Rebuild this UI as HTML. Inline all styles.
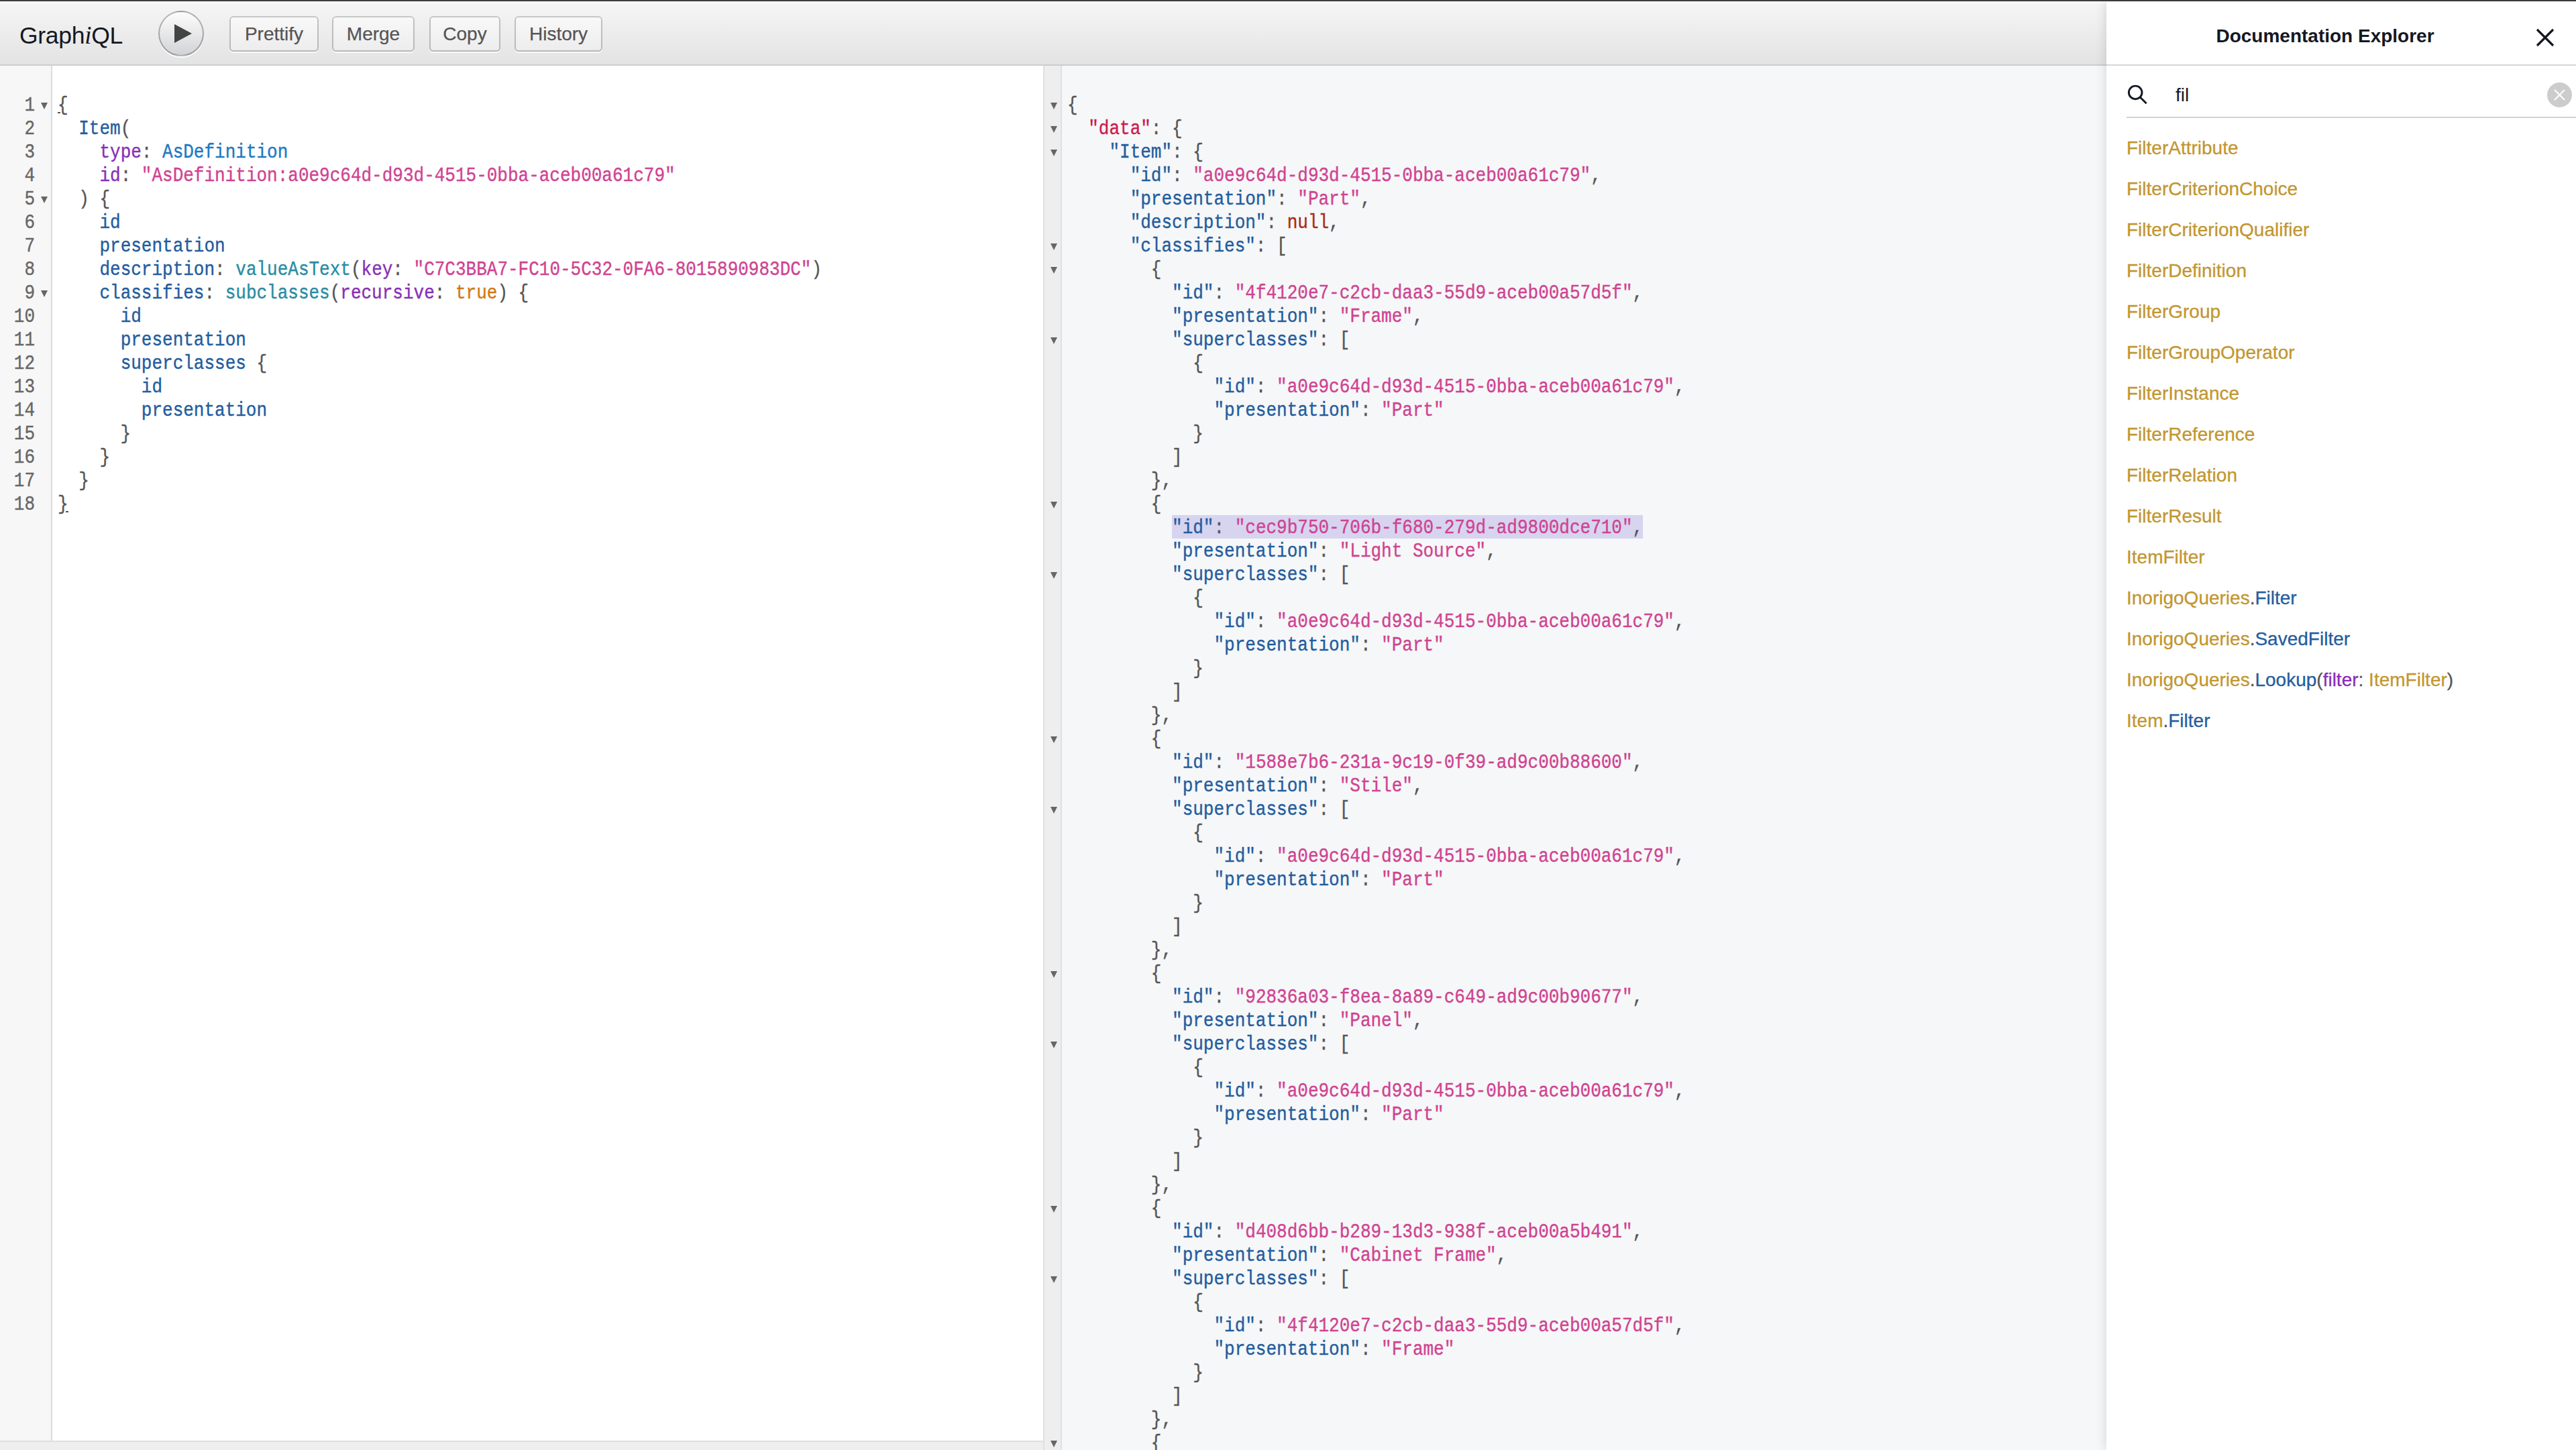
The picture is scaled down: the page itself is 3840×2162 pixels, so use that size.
<!DOCTYPE html>
<html><head><meta charset="utf-8">
<style>
html,body{margin:0;padding:0;}
body{width:3840px;height:2162px;overflow:hidden;position:relative;background:#fff;font-family:"Liberation Sans",sans-serif;}
.abs{position:absolute;}
#topline{left:0;top:0;width:3840px;height:2px;background:#3e403f;}
#toolbar{left:0;top:2px;width:3140px;height:94px;background:linear-gradient(#fbfbfb 0px,#f5f5f5 4px,#e3e3e3 94px);border-bottom:2px solid #cdcdcd;}
#logo{left:29px;top:28px;font-size:35.5px;letter-spacing:-0.3px;line-height:50px;color:#141823;white-space:nowrap;}
#logo i{font-style:italic;font-family:"Liberation Serif",serif;font-size:37px;margin:0;}
#exec{left:236px;top:16px;width:64px;height:64px;border-radius:50%;border:2px solid rgba(0,0,0,0.28);background:linear-gradient(#fdfdfd,#d2d3d6);box-shadow:0 2px 0 #fff;}
.btn{-webkit-text-stroke:0.25px #555;top:24px;height:53px;border-radius:6px;background:linear-gradient(#f9f9f9,#ececec);box-shadow:inset 0 0 0 2px rgba(0,0,0,0.22),0 2px 0 rgba(255,255,255,0.7),inset 0 2px #fff;color:#555;font-size:28px;line-height:53px;text-align:center;white-space:nowrap;}
/* editor */
#qgutter{left:0;top:98px;width:76px;height:2050px;background:#f7f7f7;border-right:2px solid #dcdcdc;}
#qpane{left:78px;top:98px;width:1477px;height:2050px;background:#fff;}
#bottombar{left:0;top:2148px;width:1555px;height:14px;background:#eeeeee;border-top:2px solid #dedede;}
#rborder{left:1555px;top:98px;width:2px;height:2064px;background:#e0e0e0;}
#rgutter{left:1557px;top:98px;width:24px;height:2064px;background:#eeeeee;border-right:2px solid #e0e0e0;}
#rpane{left:1583px;top:98px;width:1557px;height:2064px;background:#f6f7f8;}
.code{font-family:"Liberation Mono",monospace;font-size:26px;color:#555;}
.ln{position:absolute;left:0;height:35px;line-height:35px;white-space:pre;-webkit-text-stroke:0.35px currentColor;transform:scaleY(1.12);transform-origin:0 24.4px;}
.lnums .ln{width:52px;text-align:right;color:#666;}
.fold{width:0;height:0;border-left:5px solid transparent;border-right:5px solid transparent;border-top:10px solid #666;}
.p{color:#235d9e}.s{color:#cf4391}.d{color:#cc1a4c}.k{color:#aa2c14}.a{color:#8830b6}.q{color:#2a8ca3}.e{color:#2079c2}.b{color:#cf7818}
.sel{background:#d7d4f0;}
/* doc explorer */
#doc{left:3140px;top:2px;width:700px;height:2160px;background:#fff;box-shadow:0 0 16px rgba(0,0,0,0.15);}
#dochdr{left:3140px;top:96px;width:700px;height:2px;background:#d6d6d6;}
#doctitle{left:3140px;top:34px;width:652px;text-align:center;font-weight:bold;font-size:28px;line-height:40px;color:#141823;}
#searchline{left:3170px;top:174px;width:670px;height:2px;background:#d0d3d8;}
#fil{left:3243px;top:122px;font-size:28px;line-height:40px;color:#141823;}
#clear{left:3797px;top:123px;width:37px;height:37px;border-radius:50%;background:#cccccc;}
.di{-webkit-text-stroke:0.3px currentColor;left:3170px;font-size:28px;line-height:61px;color:#c29630;white-space:nowrap;}
.di .f{color:#245d9e}.di .ar{color:#8B2BB9}.di .pu{color:#555}
</style></head>
<body>
<div id="topline" class="abs"></div>
<div id="toolbar" class="abs"></div>
<div id="logo" class="abs">Graph<i>i</i>QL</div>
<div id="exec" class="abs"></div>
<svg class="abs" style="left:236px;top:16px" width="68" height="68"><path d="M24 20 L50 34 L24 48 z" fill="#444"/></svg>
<div class="abs btn" style="left:342px;width:133px">Prettify</div>
<div class="abs btn" style="left:495px;width:123px">Merge</div>
<div class="abs btn" style="left:640px;width:106px">Copy</div>
<div class="abs btn" style="left:767px;width:131px">History</div>

<div id="qgutter" class="abs"></div>
<div id="qpane" class="abs"></div>
<div id="bottombar" class="abs"></div>
<div id="rborder" class="abs"></div>
<div id="rgutter" class="abs"></div>
<div id="rpane" class="abs"></div>
<div class="abs sel" style="left:1747px;top:768px;width:702px;height:35px"></div>
<div class="abs" style="left:86px;top:167px;width:4px;height:2px;background:#555"></div>
<div class="abs" style="left:98px;top:762px;width:4px;height:2px;background:#555"></div>

<!-- QUERY LINE NUMBERS -->
<div class="abs code lnums" style="left:0px;top:0">
<div class="ln" style="top:141px">1</div>
<div class="ln" style="top:176px">2</div>
<div class="ln" style="top:211px">3</div>
<div class="ln" style="top:246px">4</div>
<div class="ln" style="top:281px">5</div>
<div class="ln" style="top:316px">6</div>
<div class="ln" style="top:351px">7</div>
<div class="ln" style="top:386px">8</div>
<div class="ln" style="top:421px">9</div>
<div class="ln" style="top:456px">10</div>
<div class="ln" style="top:491px">11</div>
<div class="ln" style="top:526px">12</div>
<div class="ln" style="top:561px">13</div>
<div class="ln" style="top:596px">14</div>
<div class="ln" style="top:631px">15</div>
<div class="ln" style="top:666px">16</div>
<div class="ln" style="top:701px">17</div>
<div class="ln" style="top:736px">18</div>
</div>
<div class="abs fold" style="left:61px;top:153px"></div>
<div class="abs fold" style="left:61px;top:293px"></div>
<div class="abs fold" style="left:61px;top:433px"></div>

<!-- QUERY CODE -->
<div class="abs code qcode" style="left:86px;top:0">
<div class="ln" style="top:141px">{</div>
<div class="ln" style="top:176px">  <span class="p">Item</span>(</div>
<div class="ln" style="top:211px">    <span class="a">type</span>: <span class="e">AsDefinition</span></div>
<div class="ln" style="top:246px">    <span class="a">id</span>: <span class="s">"AsDefinition:a0e9c64d-d93d-4515-0bba-aceb00a61c79"</span></div>
<div class="ln" style="top:281px">  ) {</div>
<div class="ln" style="top:316px">    <span class="p">id</span></div>
<div class="ln" style="top:351px">    <span class="p">presentation</span></div>
<div class="ln" style="top:386px">    <span class="p">description</span>: <span class="q">valueAsText</span>(<span class="a">key</span>: <span class="s">"C7C3BBA7-FC10-5C32-0FA6-8015890983DC"</span>)</div>
<div class="ln" style="top:421px">    <span class="p">classifies</span>: <span class="q">subclasses</span>(<span class="a">recursive</span>: <span class="b">true</span>) {</div>
<div class="ln" style="top:456px">      <span class="p">id</span></div>
<div class="ln" style="top:491px">      <span class="p">presentation</span></div>
<div class="ln" style="top:526px">      <span class="p">superclasses</span> {</div>
<div class="ln" style="top:561px">        <span class="p">id</span></div>
<div class="ln" style="top:596px">        <span class="p">presentation</span></div>
<div class="ln" style="top:631px">      }</div>
<div class="ln" style="top:666px">    }</div>
<div class="ln" style="top:701px">  }</div>
<div class="ln" style="top:736px">}</div>
</div>

<!-- RESULT FOLDS -->
<div class="abs fold" style="left:1566px;top:153px"></div>
<div class="abs fold" style="left:1566px;top:188px"></div>
<div class="abs fold" style="left:1566px;top:223px"></div>
<div class="abs fold" style="left:1566px;top:363px"></div>
<div class="abs fold" style="left:1566px;top:398px"></div>
<div class="abs fold" style="left:1566px;top:503px"></div>
<div class="abs fold" style="left:1566px;top:748px"></div>
<div class="abs fold" style="left:1566px;top:853px"></div>
<div class="abs fold" style="left:1566px;top:1098px"></div>
<div class="abs fold" style="left:1566px;top:1203px"></div>
<div class="abs fold" style="left:1566px;top:1448px"></div>
<div class="abs fold" style="left:1566px;top:1553px"></div>
<div class="abs fold" style="left:1566px;top:1798px"></div>
<div class="abs fold" style="left:1566px;top:1903px"></div>
<div class="abs fold" style="left:1566px;top:2148px"></div>


<!-- RESULT CODE -->
<div class="abs code rcode" style="left:1591px;top:0">
<div class="ln" style="top:141px">{</div>
<div class="ln" style="top:176px">  <span class="d">"data"</span>: {</div>
<div class="ln" style="top:211px">    <span class="p">"Item"</span>: {</div>
<div class="ln" style="top:246px">      <span class="p">"id"</span>: <span class="s">"a0e9c64d-d93d-4515-0bba-aceb00a61c79"</span>,</div>
<div class="ln" style="top:281px">      <span class="p">"presentation"</span>: <span class="s">"Part"</span>,</div>
<div class="ln" style="top:316px">      <span class="p">"description"</span>: <span class="k">null</span>,</div>
<div class="ln" style="top:351px">      <span class="p">"classifies"</span>: [</div>
<div class="ln" style="top:386px">        {</div>
<div class="ln" style="top:421px">          <span class="p">"id"</span>: <span class="s">"4f4120e7-c2cb-daa3-55d9-aceb00a57d5f"</span>,</div>
<div class="ln" style="top:456px">          <span class="p">"presentation"</span>: <span class="s">"Frame"</span>,</div>
<div class="ln" style="top:491px">          <span class="p">"superclasses"</span>: [</div>
<div class="ln" style="top:526px">            {</div>
<div class="ln" style="top:561px">              <span class="p">"id"</span>: <span class="s">"a0e9c64d-d93d-4515-0bba-aceb00a61c79"</span>,</div>
<div class="ln" style="top:596px">              <span class="p">"presentation"</span>: <span class="s">"Part"</span></div>
<div class="ln" style="top:631px">            }</div>
<div class="ln" style="top:666px">          ]</div>
<div class="ln" style="top:701px">        },</div>
<div class="ln" style="top:736px">        {</div>
<div class="ln" style="top:771px">          <span class="p">"id"</span>: <span class="s">"cec9b750-706b-f680-279d-ad9800dce710"</span>,</div>
<div class="ln" style="top:806px">          <span class="p">"presentation"</span>: <span class="s">"Light Source"</span>,</div>
<div class="ln" style="top:841px">          <span class="p">"superclasses"</span>: [</div>
<div class="ln" style="top:876px">            {</div>
<div class="ln" style="top:911px">              <span class="p">"id"</span>: <span class="s">"a0e9c64d-d93d-4515-0bba-aceb00a61c79"</span>,</div>
<div class="ln" style="top:946px">              <span class="p">"presentation"</span>: <span class="s">"Part"</span></div>
<div class="ln" style="top:981px">            }</div>
<div class="ln" style="top:1016px">          ]</div>
<div class="ln" style="top:1051px">        },</div>
<div class="ln" style="top:1086px">        {</div>
<div class="ln" style="top:1121px">          <span class="p">"id"</span>: <span class="s">"1588e7b6-231a-9c19-0f39-ad9c00b88600"</span>,</div>
<div class="ln" style="top:1156px">          <span class="p">"presentation"</span>: <span class="s">"Stile"</span>,</div>
<div class="ln" style="top:1191px">          <span class="p">"superclasses"</span>: [</div>
<div class="ln" style="top:1226px">            {</div>
<div class="ln" style="top:1261px">              <span class="p">"id"</span>: <span class="s">"a0e9c64d-d93d-4515-0bba-aceb00a61c79"</span>,</div>
<div class="ln" style="top:1296px">              <span class="p">"presentation"</span>: <span class="s">"Part"</span></div>
<div class="ln" style="top:1331px">            }</div>
<div class="ln" style="top:1366px">          ]</div>
<div class="ln" style="top:1401px">        },</div>
<div class="ln" style="top:1436px">        {</div>
<div class="ln" style="top:1471px">          <span class="p">"id"</span>: <span class="s">"92836a03-f8ea-8a89-c649-ad9c00b90677"</span>,</div>
<div class="ln" style="top:1506px">          <span class="p">"presentation"</span>: <span class="s">"Panel"</span>,</div>
<div class="ln" style="top:1541px">          <span class="p">"superclasses"</span>: [</div>
<div class="ln" style="top:1576px">            {</div>
<div class="ln" style="top:1611px">              <span class="p">"id"</span>: <span class="s">"a0e9c64d-d93d-4515-0bba-aceb00a61c79"</span>,</div>
<div class="ln" style="top:1646px">              <span class="p">"presentation"</span>: <span class="s">"Part"</span></div>
<div class="ln" style="top:1681px">            }</div>
<div class="ln" style="top:1716px">          ]</div>
<div class="ln" style="top:1751px">        },</div>
<div class="ln" style="top:1786px">        {</div>
<div class="ln" style="top:1821px">          <span class="p">"id"</span>: <span class="s">"d408d6bb-b289-13d3-938f-aceb00a5b491"</span>,</div>
<div class="ln" style="top:1856px">          <span class="p">"presentation"</span>: <span class="s">"Cabinet Frame"</span>,</div>
<div class="ln" style="top:1891px">          <span class="p">"superclasses"</span>: [</div>
<div class="ln" style="top:1926px">            {</div>
<div class="ln" style="top:1961px">              <span class="p">"id"</span>: <span class="s">"4f4120e7-c2cb-daa3-55d9-aceb00a57d5f"</span>,</div>
<div class="ln" style="top:1996px">              <span class="p">"presentation"</span>: <span class="s">"Frame"</span></div>
<div class="ln" style="top:2031px">            }</div>
<div class="ln" style="top:2066px">          ]</div>
<div class="ln" style="top:2101px">        },</div>
<div class="ln" style="top:2136px">        {</div>
</div>

<!-- DOC EXPLORER -->
<div id="doc" class="abs"></div>
<div id="dochdr" class="abs"></div>
<div id="doctitle" class="abs">Documentation Explorer</div>
<svg class="abs" style="left:3779px;top:41px" width="30" height="30"><path d="M3 3 L27 27 M27 3 L3 27" stroke="#141823" stroke-width="3.2" fill="none"/></svg>
<svg class="abs" style="left:3166px;top:120px" width="40" height="40"><circle cx="17.2" cy="17.9" r="9.8" stroke="#141823" stroke-width="2.9" fill="none"/><path d="M24.3 25 L33.6 34.3" stroke="#141823" stroke-width="2.9"/></svg>
<div id="fil" class="abs">fil</div>
<div id="clear" class="abs"></div>
<svg class="abs" style="left:3797px;top:123px" width="37" height="37"><path d="M11 11 L26 26 M26 11 L11 26" stroke="#fff" stroke-width="2" fill="none"/></svg>
<div id="searchline" class="abs"></div>

<div class="abs di" style="top:190px">FilterAttribute</div>
<div class="abs di" style="top:251px">FilterCriterionChoice</div>
<div class="abs di" style="top:312px">FilterCriterionQualifier</div>
<div class="abs di" style="top:373px">FilterDefinition</div>
<div class="abs di" style="top:434px">FilterGroup</div>
<div class="abs di" style="top:495px">FilterGroupOperator</div>
<div class="abs di" style="top:556px">FilterInstance</div>
<div class="abs di" style="top:617px">FilterReference</div>
<div class="abs di" style="top:678px">FilterRelation</div>
<div class="abs di" style="top:739px">FilterResult</div>
<div class="abs di" style="top:800px">ItemFilter</div>
<div class="abs di" style="top:861px">InorigoQueries<span class="pu">.</span><span class="f">Filter</span></div>
<div class="abs di" style="top:922px">InorigoQueries<span class="pu">.</span><span class="f">SavedFilter</span></div>
<div class="abs di" style="top:983px">InorigoQueries<span class="pu">.</span><span class="f">Lookup</span><span class="pu">(</span><span class="ar">filter</span><span class="pu">: </span>ItemFilter<span class="pu">)</span></div>
<div class="abs di" style="top:1044px">Item<span class="pu">.</span><span class="f">Filter</span></div>
</body></html>
